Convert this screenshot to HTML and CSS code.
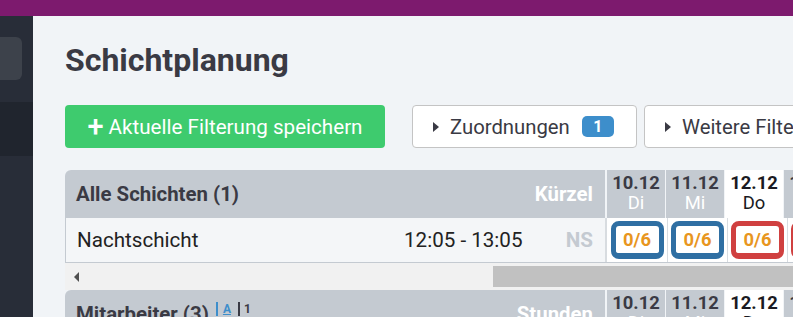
FILE: index.html
```html
<!DOCTYPE html>
<html>
<head>
<meta charset="utf-8">
<link rel="stylesheet" href="styles.css">
</head>
<body>
<div class="topbar"></div>
<div class="layout">
  <aside class="sidebar">
    <div class="side-item"></div>
    <div class="side-band"></div>
  </aside>
  <main class="main">
    <h1 class="title">Schichtplanung</h1>
    <div class="toolbar">
      <button class="btn-green"><span class="plus">+</span>Aktuelle Filterung speichern</button>
      <button class="btn-outline btn-assign"><span class="caret"></span>Zuordnungen <span class="badge">1</span></button>
      <button class="btn-outline btn-more"><span class="caret"></span>Weitere Filter</button>
    </div>
    <div class="table">
      <div class="hrow">
        <div class="left head-left">
          <span class="head-title">Alle Schichten (1)</span>
          <span class="head-right">Kürzel</span>
        </div>
        <div class="dcol"><b>10.12</b><span>Di</span></div>
        <div class="dcol"><b>11.12</b><span>Mi</span></div>
        <div class="dcol today"><b>12.12</b><span>Do</span></div>
        <div class="dcol"><b>13.12</b><span>Fr</span></div>
      </div>
      <div class="brow">
        <div class="left body-left">
          <span class="shift-name">Nachtschicht</span>
          <span class="shift-time">12:05 - 13:05</span>
          <span class="shift-code">NS</span>
        </div>
        <div class="ccol"><div class="cell blue">0/6</div></div>
        <div class="ccol"><div class="cell blue">0/6</div></div>
        <div class="ccol"><div class="cell red">0/6</div></div>
        <div class="ccol"><div class="cell red">0/6</div></div>
      </div>
      <div class="scrollrow">
        <span class="sarrow"></span>
        <div class="sthumb"></div>
      </div>
      <div class="hrow">
        <div class="left head-left">
          <span class="head-title">Mitarbeiter (3) <span class="sort">A</span><span class="sort2">1</span></span>
          <span class="head-right">Stunden</span>
        </div>
        <div class="dcol"><b>10.12</b><span>Di</span></div>
        <div class="dcol"><b>11.12</b><span>Mi</span></div>
        <div class="dcol today"><b>12.12</b><span>Do</span></div>
        <div class="dcol"><b>13.12</b><span>Fr</span></div>
      </div>
    </div>
  </main>
</div>
</body>
</html>
```
FILE: styles.css
```css
html, body {
  margin: 0;
  padding: 0;
  overflow: hidden;
  width: 793px;
  height: 317px;
  background: #f1f4f7;
  font-family: Roboto, "Liberation Sans", sans-serif;
}
.topbar {
  height: 16px;
  background: #7d1a6e;
}
.layout {
  display: flex;
  height: 301px;
}
.sidebar {
  width: 33px;
  flex: none;
  background: #282d38;
  padding-top: 21px;
  box-sizing: border-box;
}
.side-item {
  width: 22px;
  height: 43px;
  background: #3d424b;
  border-radius: 0 6px 6px 0;
}
.side-band {
  margin-top: 22px;
  height: 54px;
  background: #20252e;
}
.main {
  flex: 1;
  padding-left: 32px;
  min-width: 0;
}
.title {
  margin: 24px 0 0 0;
  font-size: 32px;
  line-height: 40px;
  font-weight: 700;
  color: #3a3a44;
}
.toolbar {
  display: flex;
  gap: 27px;
  margin-top: 25px;
  white-space: nowrap;
}
.toolbar .btn-more {
  margin-left: -20px;
}
button {
  font-family: inherit;
  cursor: pointer;
}
.btn-green {
  flex: none;
  width: 320px;
  height: 43px;
  background: #3ecb6e;
  color: #fff;
  border: none;
  border-radius: 4px;
  font-size: 20.6px;
  padding: 0;
  display: flex;
  align-items: center;
  justify-content: center;
}
.plus {
  font-size: 29px;
  font-weight: 500;
  margin-right: 5px;
  position: relative;
  top: -1px;
}
.btn-outline {
  flex: none;
  height: 43px;
  background: #fff;
  border: 1px solid #c4c4c4;
  border-radius: 4px;
  font-size: 20.3px;
  color: #3a3a44;
  padding: 0 0 0 20px;
  display: flex;
  align-items: center;
}
.btn-assign {
  width: 225px;
}
.btn-more {
  padding-right: 21px;
}
.caret {
  width: 0;
  height: 0;
  border-top: 5px solid transparent;
  border-bottom: 5px solid transparent;
  border-left: 6px solid #3a3a44;
  margin-right: 11px;
}
.badge {
  display: inline-block;
  margin-left: 12px;
  background: #3d8ecb;
  color: #fff;
  font-size: 16px;
  font-weight: 700;
  border-radius: 5px;
  width: 32px;
  height: 21px;
  line-height: 21px;
  text-align: center;
}
.table {
  margin-top: 22px;
  width: 760px;
}
.hrow {
  display: flex;
  height: 48px;
  background: #c4cad1;
  border-radius: 6px 0 0 0;
}
.left {
  flex: none;
  width: 540px;
  box-sizing: border-box;
  display: flex;
  align-items: center;
}
.head-left {
  padding: 0 12px 0 11px;
  justify-content: space-between;
}
.head-title {
  font-size: 20.4px;
  font-weight: 700;
  color: #3a3a44;
}
.head-right {
  font-size: 20.4px;
  font-weight: 700;
  color: #fff;
}
.sort {
  color: #3d8ecb;
  font-size: 12px;
  border-left: 2px solid #3d8ecb;
  padding-left: 5px;
  margin-left: 2px;
  text-decoration: underline;
  vertical-align: top;
}
.sort2 {
  color: #3a3a44;
  font-size: 12px;
  border-left: 2px solid #3a3a44;
  padding-left: 4px;
  margin-left: 7px;
  vertical-align: top;
}
.dcol {
  flex: none;
  width: 59px;
  border-left: 1px solid #f1f4f7;
  display: flex;
  flex-direction: column;
  align-items: center;
  padding-top: 3px;
  box-sizing: border-box;
  line-height: 20px;
  font-size: 18.4px;
}
.hrow .left + .dcol {
  border-left: 2px solid #f1f4f7;
  width: 60px;
}
.dcol b {
  color: #3a3a44;
}
.dcol span {
  color: #fff;
}
.dcol.today {
  background: #fff;
}
.dcol.today b {
  color: #1a1a22;
}
.dcol.today span {
  color: #1a1a22;
}
.brow {
  display: flex;
  height: 45px;
  border-bottom: 1px solid #c4cad1;
  box-sizing: border-box;
}
.body-left {
  background: #f4f6f8;
  border-left: 1px solid #c4cad1;
  padding: 0 12px 0 11px;
  font-size: 20.6px;
}
.shift-name {
  color: #222;
  width: 327px;
}
.shift-time {
  color: #222;
  flex: 1;
}
.shift-code {
  color: #c4cad1;
  font-weight: 700;
}
.ccol {
  flex: none;
  width: 59px;
  border-left: 1px solid #d8dce0;
  background: #fff;
  display: flex;
  align-items: center;
  justify-content: center;
}
.brow .left + .ccol {
  border-left: 2px solid #d8dce0;
  width: 60px;
}
.cell {
  width: 53px;
  height: 38px;
  box-sizing: border-box;
  border: 5px solid;
  border-bottom-width: 6px;
  border-radius: 8px;
  display: flex;
  align-items: center;
  justify-content: center;
  color: #e8961e;
  font-weight: 700;
  font-size: 18.4px;
  background: #fff;
}
.cell.blue { border-color: #2f6fa3; }
.cell.red { border-color: #d04040; }
.scrollrow {
  height: 27px;
  background: #f1f1f1;
  display: flex;
  align-items: center;
}
.sarrow {
  width: 0;
  height: 0;
  border-top: 5px solid transparent;
  border-bottom: 5px solid transparent;
  border-right: 5px solid #505050;
  margin-left: 9px;
}
.sthumb {
  margin-left: 414px;
  height: 21px;
  width: 320px;
  background: #c1c1c1;
}
```
